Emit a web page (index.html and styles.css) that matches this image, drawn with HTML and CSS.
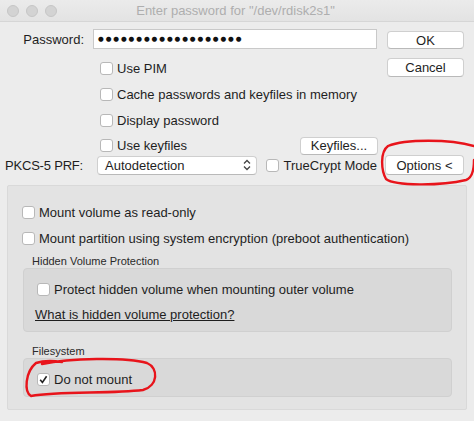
FILE: index.html
```html
<!DOCTYPE html>
<html>
<head>
<meta charset="utf-8">
<link rel="stylesheet" href="styles.css">
</head>
<body>
<div class="window">
  <div class="titlebar">
    <div class="lights"><span class="light"></span><span class="light"></span><span class="light"></span></div>
    <div class="title">Enter password for "/dev/rdisk2s1"</div>
  </div>

  <div class="top">
    <div class="row r-pass">
      <div class="label">Password:</div>
      <div class="mid"><div class="input"><span class="dots">●●●●●●●●●●●●●●●●●●●</span></div></div>
      <div class="right"><div class="btn">OK</div></div>
    </div>
    <div class="row r-pim">
      <div class="label"></div>
      <div class="mid"><label class="check"><span class="box"></span>Use PIM</label></div>
      <div class="right"><div class="btn">Cancel</div></div>
    </div>
    <div class="row r-gap">
      <div class="label"></div>
      <div class="mid"><label class="check"><span class="box"></span>Cache passwords and keyfiles in memory</label></div>
      <div class="right"></div>
    </div>
    <div class="row r-gap">
      <div class="label"></div>
      <div class="mid"><label class="check"><span class="box"></span>Display password</label></div>
      <div class="right"></div>
    </div>
    <div class="row r-gap r-keys">
      <div class="label"></div>
      <div class="mid between"><label class="check"><span class="box"></span>Use keyfiles</label><div class="btn btn-keys">Keyfiles...</div></div>
      <div class="right"></div>
    </div>
    <div class="row r-prf">
      <div class="label lbl-prf">PKCS-5 PRF:</div>
      <div class="mid">
        <div class="select">Autodetection
          <svg class="updown" width="8" height="12" viewBox="0 0 8 12"><path d="M1 4.5 L4 1.5 L7 4.5 M1 7.5 L4 10.5 L7 7.5" fill="none" stroke="#444" stroke-width="1.3"/></svg>
        </div>
        <label class="check tc"><span class="box"></span>TrueCrypt Mode</label>
      </div>
      <div class="right"><div class="btn btn-opt">Options &lt;</div></div>
    </div>
  </div>

  <div class="panel">
    <label class="check opt first"><span class="box"></span>Mount volume as read-only</label>
    <label class="check opt"><span class="box"></span>Mount partition using system encryption (preboot authentication)</label>
    <div class="glabel">Hidden Volume Protection</div>
    <div class="group g-hidden">
      <label class="check"><span class="box"></span>Protect hidden volume when mounting outer volume</label>
      <a class="link">What is hidden volume protection?</a>
    </div>
    <div class="glabel g2">Filesystem</div>
    <div class="group g-fs">
      <label class="check"><span class="box checked"><svg width="11" height="11" viewBox="0 0 11 11"><path d="M2.2 5.8 L4.4 8.4 L8.6 2.2" fill="none" stroke="#222" stroke-width="1.6"/></svg></span>Do not mount</label>
    </div>
  </div>

  <svg class="marks" width="474" height="421" viewBox="0 0 474 421">
    <path d="M474 146 C 450 139, 405 139, 388 146 C 380 152, 381 170, 386 179 C 395 186, 440 186, 466 180 C 472 178, 474 170, 474 160" fill="none" stroke="#e8141b" stroke-width="2.4" stroke-linecap="round"/>
    <path d="M42 364 C 70 358, 125 357, 147 363 C 159 368, 158 386, 143 390 C 110 394, 60 391, 31 396 C 24 392, 25 372, 36 363 C 45 360, 55 361, 62 362" fill="none" stroke="#e8141b" stroke-width="2.4" stroke-linecap="round"/>
  </svg>
</div>
</body>
</html>
```

FILE: styles.css
```css
* { box-sizing: border-box; }
html, body { margin: 0; padding: 0; }
body {
  font-family: "Liberation Sans", Arial, sans-serif;
  font-size: 13px;
  color: #1e1e1e;
  background: #ececec;
}
.window {
  position: relative;
  width: 474px;
  height: 421px;
  background: #ececec;
  overflow: hidden;
}
.titlebar {
  height: 22px;
  display: flex;
  align-items: center;
  background: linear-gradient(#ebebeb, #e3e3e3);
  border-bottom: 1px solid #d6d6d6;
  position: relative;
}
.lights { display: flex; gap: 7px; padding-left: 7px; }
.light {
  width: 12px; height: 12px; border-radius: 50%;
  background: #d3d3d3; border: 1px solid #c6c6c6;
}
.title {
  flex: 1;
  text-align: center;
  color: #aeaeae;
  font-size: 13px;
  margin-right: 60px;
}
.top { display: flex; flex-direction: column; }
.row { display: flex; height: 20px; align-items: center; }
.r-pass { margin-top: 7px; }
.r-pim { margin-top: 9px; }
.r-gap { margin-top: 6px; }
.r-keys { height: 19px; }
.label { width: 85px; text-align: right; padding-right: 1px; flex: none; }
.lbl-prf { padding-right: 2px; letter-spacing: -0.2px; }
.mid { width: 284px; margin-left: 8px; display: flex; align-items: center; height: 100%; flex: none; }
.between { justify-content: space-between; }
.right { width: 77px; margin-left: 10px; height: 100%; flex: none; }
.input {
  width: 284px; height: 20px;
  background: #fff;
  border: 1px solid #c9c9c9;
  display: flex; align-items: center;
  padding-left: 4px;
}
.dots { font-family: "DejaVu Sans", sans-serif; font-size: 6.6px; letter-spacing: 1.9px; color: #111; }
.btn {
  height: 19px;
  background: #fff;
  border: 1px solid #cfcfcf;
  border-bottom-color: #b9b9b9;
  border-radius: 4px;
  display: flex; align-items: center; justify-content: center;
  width: 100%;
}
.r-pass .btn { height: 18px; margin-top: 2px; }
.btn-keys { width: 78px; height: 18px; margin-right: -1px; }
.btn-opt { height: 20px; width: 79px; margin-left: -2px; }
.check { display: flex; align-items: center; white-space: nowrap; padding-left: 7px; }
.box {
  width: 13px; height: 13px;
  background: #fff;
  border: 1px solid #b8b8b8;
  border-radius: 3px;
  margin-right: 4px;
  flex: none;
  display: flex; align-items: center; justify-content: center;
}
.select {
  width: 161px; height: 19px;
  margin-left: 4px;
  background: #fff;
  border: 1px solid #cfcfcf;
  border-bottom-color: #b9b9b9;
  border-radius: 4px;
  display: flex; align-items: center; justify-content: space-between;
  padding: 0 5px 0 7px;
}
.tc { padding-left: 9px; }
.tc .box { margin-right: 5px; }
.panel {
  margin: 10px 0 0 7px;
  width: 460px;
  height: 225px;
  background: #e3e3e3;
  border: 1px solid #d9d9d9;
  border-radius: 2px;
  padding: 0 14px 0 14px;
  display: flex; flex-direction: column;
}
.panel .check { padding-left: 0; height: 16px; }
.opt.first { margin-top: 18px; }
.opt { margin-top: 10px; }
.glabel { font-size: 11px; color: #2a2a2a; margin: 9px 0 0 10px; height: 13px; line-height: 13px; }
.g2 { margin-top: 13px; }
.group {
  margin-left: 1px;
  width: 429px;
  background: #d9d9d9;
  border: 1px solid #d0d0d0;
  border-radius: 4px;
  display: flex; flex-direction: column;
  padding-left: 13px;
}
.g-hidden { height: 64px; padding-top: 12px; }
.g-fs { height: 39px; padding-top: 12px; }
.link {
  margin-top: 10px; margin-left: -2px;
  height: 16px; line-height: 16px;
  text-decoration: underline;
  color: #1e1e1e;
}
.marks { position: absolute; left: 0; top: 0; pointer-events: none; }
```
